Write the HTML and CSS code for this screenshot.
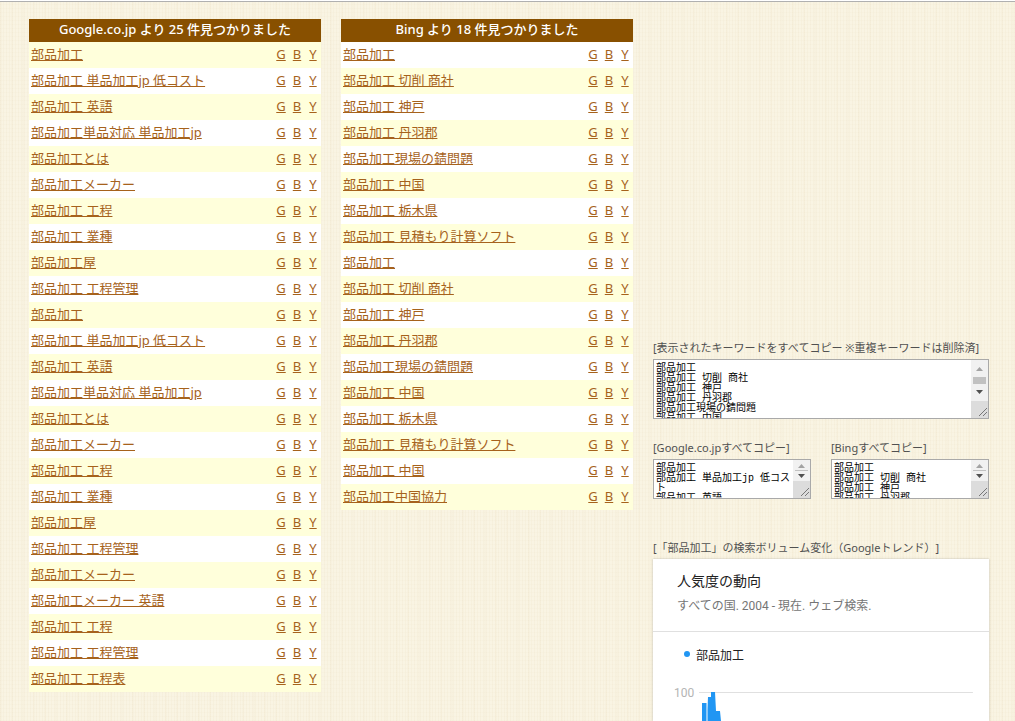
FILE: index.html
```
<!DOCTYPE html>
<html lang="ja">
<head>
<meta charset="utf-8">
<title>部品加工 キーワード</title>
<link rel="stylesheet" href="styles.css">
</head>
<body>
<main class="page">
<section>
<table class="keywords odd">
<thead><tr><th colspan="4">Google.co.jp より 25 件見つかりました</th></tr></thead>
<tbody>
<tr><td><a href="#">部品加工</a></td><td><a href="#">G</a></td><td><a href="#">B</a></td><td><a href="#">Y</a></td></tr>
<tr><td><a href="#">部品加工 単品加工jp 低コスト</a></td><td><a href="#">G</a></td><td><a href="#">B</a></td><td><a href="#">Y</a></td></tr>
<tr><td><a href="#">部品加工 英語</a></td><td><a href="#">G</a></td><td><a href="#">B</a></td><td><a href="#">Y</a></td></tr>
<tr><td><a href="#">部品加工単品対応 単品加工jp</a></td><td><a href="#">G</a></td><td><a href="#">B</a></td><td><a href="#">Y</a></td></tr>
<tr><td><a href="#">部品加工とは</a></td><td><a href="#">G</a></td><td><a href="#">B</a></td><td><a href="#">Y</a></td></tr>
<tr><td><a href="#">部品加工メーカー</a></td><td><a href="#">G</a></td><td><a href="#">B</a></td><td><a href="#">Y</a></td></tr>
<tr><td><a href="#">部品加工 工程</a></td><td><a href="#">G</a></td><td><a href="#">B</a></td><td><a href="#">Y</a></td></tr>
<tr><td><a href="#">部品加工 業種</a></td><td><a href="#">G</a></td><td><a href="#">B</a></td><td><a href="#">Y</a></td></tr>
<tr><td><a href="#">部品加工屋</a></td><td><a href="#">G</a></td><td><a href="#">B</a></td><td><a href="#">Y</a></td></tr>
<tr><td><a href="#">部品加工 工程管理</a></td><td><a href="#">G</a></td><td><a href="#">B</a></td><td><a href="#">Y</a></td></tr>
<tr><td><a href="#">部品加工</a></td><td><a href="#">G</a></td><td><a href="#">B</a></td><td><a href="#">Y</a></td></tr>
<tr><td><a href="#">部品加工 単品加工jp 低コスト</a></td><td><a href="#">G</a></td><td><a href="#">B</a></td><td><a href="#">Y</a></td></tr>
<tr><td><a href="#">部品加工 英語</a></td><td><a href="#">G</a></td><td><a href="#">B</a></td><td><a href="#">Y</a></td></tr>
<tr><td><a href="#">部品加工単品対応 単品加工jp</a></td><td><a href="#">G</a></td><td><a href="#">B</a></td><td><a href="#">Y</a></td></tr>
<tr><td><a href="#">部品加工とは</a></td><td><a href="#">G</a></td><td><a href="#">B</a></td><td><a href="#">Y</a></td></tr>
<tr><td><a href="#">部品加工メーカー</a></td><td><a href="#">G</a></td><td><a href="#">B</a></td><td><a href="#">Y</a></td></tr>
<tr><td><a href="#">部品加工 工程</a></td><td><a href="#">G</a></td><td><a href="#">B</a></td><td><a href="#">Y</a></td></tr>
<tr><td><a href="#">部品加工 業種</a></td><td><a href="#">G</a></td><td><a href="#">B</a></td><td><a href="#">Y</a></td></tr>
<tr><td><a href="#">部品加工屋</a></td><td><a href="#">G</a></td><td><a href="#">B</a></td><td><a href="#">Y</a></td></tr>
<tr><td><a href="#">部品加工 工程管理</a></td><td><a href="#">G</a></td><td><a href="#">B</a></td><td><a href="#">Y</a></td></tr>
<tr><td><a href="#">部品加工メーカー</a></td><td><a href="#">G</a></td><td><a href="#">B</a></td><td><a href="#">Y</a></td></tr>
<tr><td><a href="#">部品加工メーカー 英語</a></td><td><a href="#">G</a></td><td><a href="#">B</a></td><td><a href="#">Y</a></td></tr>
<tr><td><a href="#">部品加工 工程</a></td><td><a href="#">G</a></td><td><a href="#">B</a></td><td><a href="#">Y</a></td></tr>
<tr><td><a href="#">部品加工 工程管理</a></td><td><a href="#">G</a></td><td><a href="#">B</a></td><td><a href="#">Y</a></td></tr>
<tr><td><a href="#">部品加工 工程表</a></td><td><a href="#">G</a></td><td><a href="#">B</a></td><td><a href="#">Y</a></td></tr>
</tbody>
</table>
</section>
<section>
<table class="keywords even">
<thead><tr><th colspan="4">Bing より 18 件見つかりました</th></tr></thead>
<tbody>
<tr><td><a href="#">部品加工</a></td><td><a href="#">G</a></td><td><a href="#">B</a></td><td><a href="#">Y</a></td></tr>
<tr><td><a href="#">部品加工 切削 商社</a></td><td><a href="#">G</a></td><td><a href="#">B</a></td><td><a href="#">Y</a></td></tr>
<tr><td><a href="#">部品加工 神戸</a></td><td><a href="#">G</a></td><td><a href="#">B</a></td><td><a href="#">Y</a></td></tr>
<tr><td><a href="#">部品加工 丹羽郡</a></td><td><a href="#">G</a></td><td><a href="#">B</a></td><td><a href="#">Y</a></td></tr>
<tr><td><a href="#">部品加工現場の錆問題</a></td><td><a href="#">G</a></td><td><a href="#">B</a></td><td><a href="#">Y</a></td></tr>
<tr><td><a href="#">部品加工 中国</a></td><td><a href="#">G</a></td><td><a href="#">B</a></td><td><a href="#">Y</a></td></tr>
<tr><td><a href="#">部品加工 栃木県</a></td><td><a href="#">G</a></td><td><a href="#">B</a></td><td><a href="#">Y</a></td></tr>
<tr><td><a href="#">部品加工 見積もり計算ソフト</a></td><td><a href="#">G</a></td><td><a href="#">B</a></td><td><a href="#">Y</a></td></tr>
<tr><td><a href="#">部品加工</a></td><td><a href="#">G</a></td><td><a href="#">B</a></td><td><a href="#">Y</a></td></tr>
<tr><td><a href="#">部品加工 切削 商社</a></td><td><a href="#">G</a></td><td><a href="#">B</a></td><td><a href="#">Y</a></td></tr>
<tr><td><a href="#">部品加工 神戸</a></td><td><a href="#">G</a></td><td><a href="#">B</a></td><td><a href="#">Y</a></td></tr>
<tr><td><a href="#">部品加工 丹羽郡</a></td><td><a href="#">G</a></td><td><a href="#">B</a></td><td><a href="#">Y</a></td></tr>
<tr><td><a href="#">部品加工現場の錆問題</a></td><td><a href="#">G</a></td><td><a href="#">B</a></td><td><a href="#">Y</a></td></tr>
<tr><td><a href="#">部品加工 中国</a></td><td><a href="#">G</a></td><td><a href="#">B</a></td><td><a href="#">Y</a></td></tr>
<tr><td><a href="#">部品加工 栃木県</a></td><td><a href="#">G</a></td><td><a href="#">B</a></td><td><a href="#">Y</a></td></tr>
<tr><td><a href="#">部品加工 見積もり計算ソフト</a></td><td><a href="#">G</a></td><td><a href="#">B</a></td><td><a href="#">Y</a></td></tr>
<tr><td><a href="#">部品加工 中国</a></td><td><a href="#">G</a></td><td><a href="#">B</a></td><td><a href="#">Y</a></td></tr>
<tr><td><a href="#">部品加工中国協力</a></td><td><a href="#">G</a></td><td><a href="#">B</a></td><td><a href="#">Y</a></td></tr>
</tbody>
</table>
</section>
<aside class="side">
<div class="field">
<label for="copy-all">[表示されたキーワードをすべてコピー ※重複キーワードは削除済]</label>
<div class="box tall">
<textarea id="copy-all">部品加工
部品加工 切削 商社
部品加工 神戸
部品加工 丹羽郡
部品加工現場の錆問題
部品加工 中国</textarea>
<svg class="scroll" width="17" height="58" viewBox="0 0 17 58" aria-hidden="true"><rect width="17" height="58" fill="#f1f1f1"/><rect y="41" width="17" height="17" fill="#dcdcdc"/><path d="M5 11L8.500 7L12 11z" fill="#a3a3a3"/><rect x="2" y="17" width="13" height="7" fill="#c1c1c1"/><path d="M5 30L8.500 34L12 30z" fill="#505050"/><path d="M8 56L16 48M12 56L16 52" stroke="#777" fill="none"/></svg>
</div>
</div>
<div class="pair">
<div class="field">
<label for="copy-google">[Google.co.jpすべてコピー]</label>
<div class="box">
<textarea id="copy-google">部品加工
部品加工 単品加工jp 低コスト
部品加工 英語</textarea>
<svg class="scroll" width="17" height="38" viewBox="0 0 17 38" aria-hidden="true"><rect width="17" height="38" fill="#f1f1f1"/><rect y="21" width="17" height="17" fill="#dcdcdc"/><path d="M5 8L8.500 4L12 8z" fill="#a3a3a3"/><rect x="2" y="10" width="13" height="1" fill="#c1c1c1"/><path d="M5 14L8.500 18L12 14z" fill="#505050"/><path d="M8 36L16 28M12 36L16 32" stroke="#777" fill="none"/></svg>
</div>
</div>
<div class="field">
<label for="copy-bing">[Bingすべてコピー]</label>
<div class="box">
<textarea id="copy-bing">部品加工
部品加工 切削 商社
部品加工 神戸
部品加工 丹羽郡</textarea>
<svg class="scroll" width="17" height="38" viewBox="0 0 17 38" aria-hidden="true"><rect width="17" height="38" fill="#f1f1f1"/><rect y="21" width="17" height="17" fill="#dcdcdc"/><path d="M5 8L8.500 4L12 8z" fill="#a3a3a3"/><rect x="2" y="10" width="13" height="1" fill="#c1c1c1"/><path d="M5 14L8.500 18L12 14z" fill="#505050"/><path d="M8 36L16 28M12 36L16 32" stroke="#777" fill="none"/></svg>
</div>
</div>
</div>
<p class="caption">[「部品加工」の検索ボリューム変化（Googleトレンド）]</p>
<section class="trend">
<header>
<h2>人気度の動向</h2>
<p>すべての国. 2004 - 現在. ウェブ検索.</p>
</header>
<div class="legend"><span class="dot"></span>部品加工</div>
<div class="chart">
<span class="tick">100</span>
<div class="plot"><svg width="24" height="29" viewBox="0 0 24 29" aria-hidden="true"><path d="M3 29V11H7.500V29H8.500V17L9 5H12V0H16L17 19H21L22 29z" fill="#2196f3"/></svg></div>
</div>
</section>
</aside>
</main>
</body>
</html>
```
FILE: styles.css
```
* { box-sizing: border-box; }

body {
  margin: 0;
  color: #505050;
  font-family: "Noto Sans", "Noto Sans CJK JP", sans-serif;
  font-size: 13px;
  text-spacing-trim: space-all;
  background-color: #f9f4e3;
  background-image:
    linear-gradient(#fff 0 1px, #b0b0b0 1px 2px, transparent 2px),
    repeating-linear-gradient(90deg, rgba(222, 202, 160, .09) 0 1px, transparent 1px 3px),
    repeating-linear-gradient(90deg, rgba(222, 202, 160, .06) 0 2px, transparent 2px 11px),
    repeating-linear-gradient(0deg, rgba(222, 202, 160, .05) 0 1px, transparent 1px 4px);
}

.page {
  display: grid;
  grid-template-columns: 292fr 292fr 336fr;
  gap: 20px;
  min-height: 100vh;
  padding: 19px 26px 0 29px;
}

.keywords {
  width: 100%;
  border-collapse: collapse;
  background: #fff;
}

.keywords th {
  height: 23px;
  padding: 0 0 3px;
  color: #fff;
  background: #885000;
  font-weight: 500;
  line-height: 20px;
}

.keywords td {
  min-width: 16px;
  height: 26px;
  padding: 0 0 2px;
  line-height: 24px;
  text-align: center;
}

.keywords td:first-child {
  width: 100%;
  padding-left: 2px;
  text-align: left;
}

.odd tbody tr:nth-child(odd),
.even tbody tr:nth-child(even) { background: #ffffdb; }

a { color: #a6621c; }

.side {
  display: flex;
  flex-direction: column;
  padding-top: 318px;
}

label,
.caption {
  display: block;
  margin: 0;
  font-size: 11px;
  line-height: 22px;
  white-space: nowrap;
}

.pair {
  display: grid;
  grid-template-columns: 1fr 1fr;
  gap: 20px;
  margin: 18px 0 38px;
}

.box {
  position: relative;
  height: 40px;
  border: 1px solid #a9a9a9;
  background: #fff;
}

.tall { height: 60px; }

textarea {
  display: block;
  width: 100%;
  height: 100%;
  padding: 4px 19px 0 2px;
  border: 0;
  outline: 0;
  resize: none;
  overflow: hidden;
  color: #000;
  background: transparent;
  font: 10px/10px "Liberation Mono", "Noto Sans CJK JP", monospace;
}

.scroll {
  position: absolute;
  top: 0;
  right: 0;
}

.trend {
  flex: 1;
  background: #fff;
  box-shadow: 0 0 2px rgba(0, 0, 0, .25);
  font-family: Roboto, "Noto Sans CJK JP", sans-serif;
  font-size: 12px;
}

.trend header {
  height: 73px;
  padding: 10px 24px 0;
  border-bottom: 1px solid #e0e0e0;
}

.trend h2 {
  margin: 0;
  color: #212121;
  font-size: 14px;
  font-weight: 400;
  line-height: 24px;
}

.trend p {
  margin: 0;
  color: #757575;
  line-height: 26px;
}

.legend {
  display: flex;
  gap: 6px;
  padding: 12px 31px 0;
  color: #212121;
  line-height: 24px;
}

.dot {
  width: 6px;
  height: 6px;
  margin-top: 7px;
  border-radius: 50%;
  background: #2196f3;
}

.chart {
  display: flex;
  gap: 5px;
  padding: 16px 16px 0 21px;
  color: #b4b4b4;
}

.tick { line-height: 18px; }

.plot {
  flex: 1;
  height: 21px;
  margin-top: 8px;
  background: linear-gradient(#e0e0e0, #e0e0e0) top / 100% 1px no-repeat;
}

.plot svg { display: block; }
```
